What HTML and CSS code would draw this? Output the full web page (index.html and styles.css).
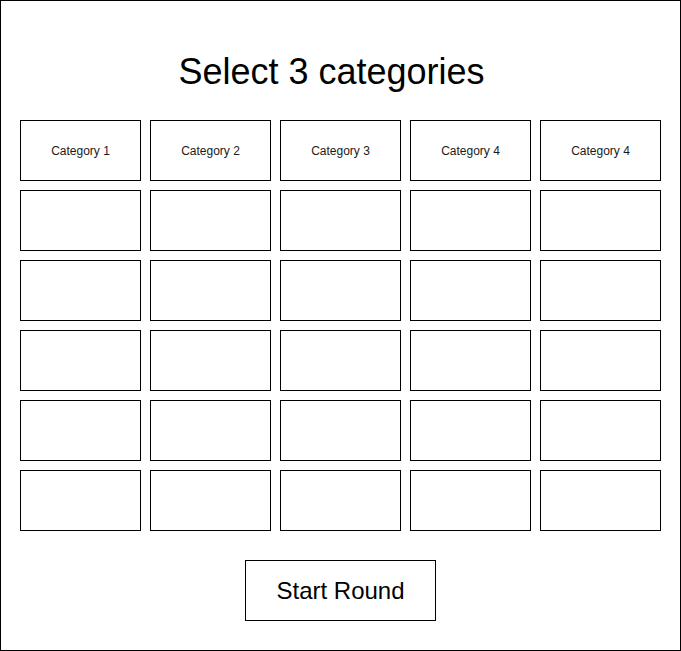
FILE: index.html
```html
<!DOCTYPE html>
<html lang="en">
<head>
  <meta charset="UTF-8">
  <meta name="viewport" content="width=device-width, initial-scale=1.0">
  <title>Select Categories</title>
  <link rel="stylesheet" href="styles.css">
</head>
<body>
  <div class="frame">
    <h1 class="title">Select 3 categories</h1>

    <div class="grid">
      <div class="cell">Category 1</div>
      <div class="cell">Category 2</div>
      <div class="cell">Category 3</div>
      <div class="cell">Category 4</div>
      <div class="cell">Category 4</div>

      <div class="cell"></div><div class="cell"></div><div class="cell"></div><div class="cell"></div><div class="cell"></div>
      <div class="cell"></div><div class="cell"></div><div class="cell"></div><div class="cell"></div><div class="cell"></div>
      <div class="cell"></div><div class="cell"></div><div class="cell"></div><div class="cell"></div><div class="cell"></div>
      <div class="cell"></div><div class="cell"></div><div class="cell"></div><div class="cell"></div><div class="cell"></div>
      <div class="cell"></div><div class="cell"></div><div class="cell"></div><div class="cell"></div><div class="cell"></div>
    </div>

    <div class="actions">
      <button class="start-button">Start Round</button>
    </div>
  </div>
</body>
</html>
```

FILE: styles.css
```css
body {
  margin: 0;
  font-family: "Liberation Sans", Arial, sans-serif;
  background: white;
  color: #000;
}
.frame {
  box-sizing: border-box;
  width: 681px;
  height: 651px;
  border: 1px solid #000;
  padding-top: 51px;
}
.title {
  margin: 0 0 28px;
  padding-right: 18px;
  font-size: 36px;
  font-weight: normal;
  line-height: 40px;
  text-align: center;
}
.grid {
  display: grid;
  grid-template-columns: repeat(5, 121px);
  grid-auto-rows: 61px;
  gap: 9px;
  justify-content: center;
}
.cell {
  box-sizing: border-box;
  border: 1px solid #000;
  display: flex;
  align-items: center;
  justify-content: center;
  font-size: 12px;
  color: #1a1a1a;
}
.actions {
  display: flex;
  justify-content: center;
  margin-top: 29px;
}
.start-button {
  box-sizing: border-box;
  width: 191px;
  height: 61px;
  border: 1px solid #000;
  background: white;
  font-family: "Liberation Sans", Arial, sans-serif;
  font-size: 24px;
  color: #000;
  padding: 0;
}
```
